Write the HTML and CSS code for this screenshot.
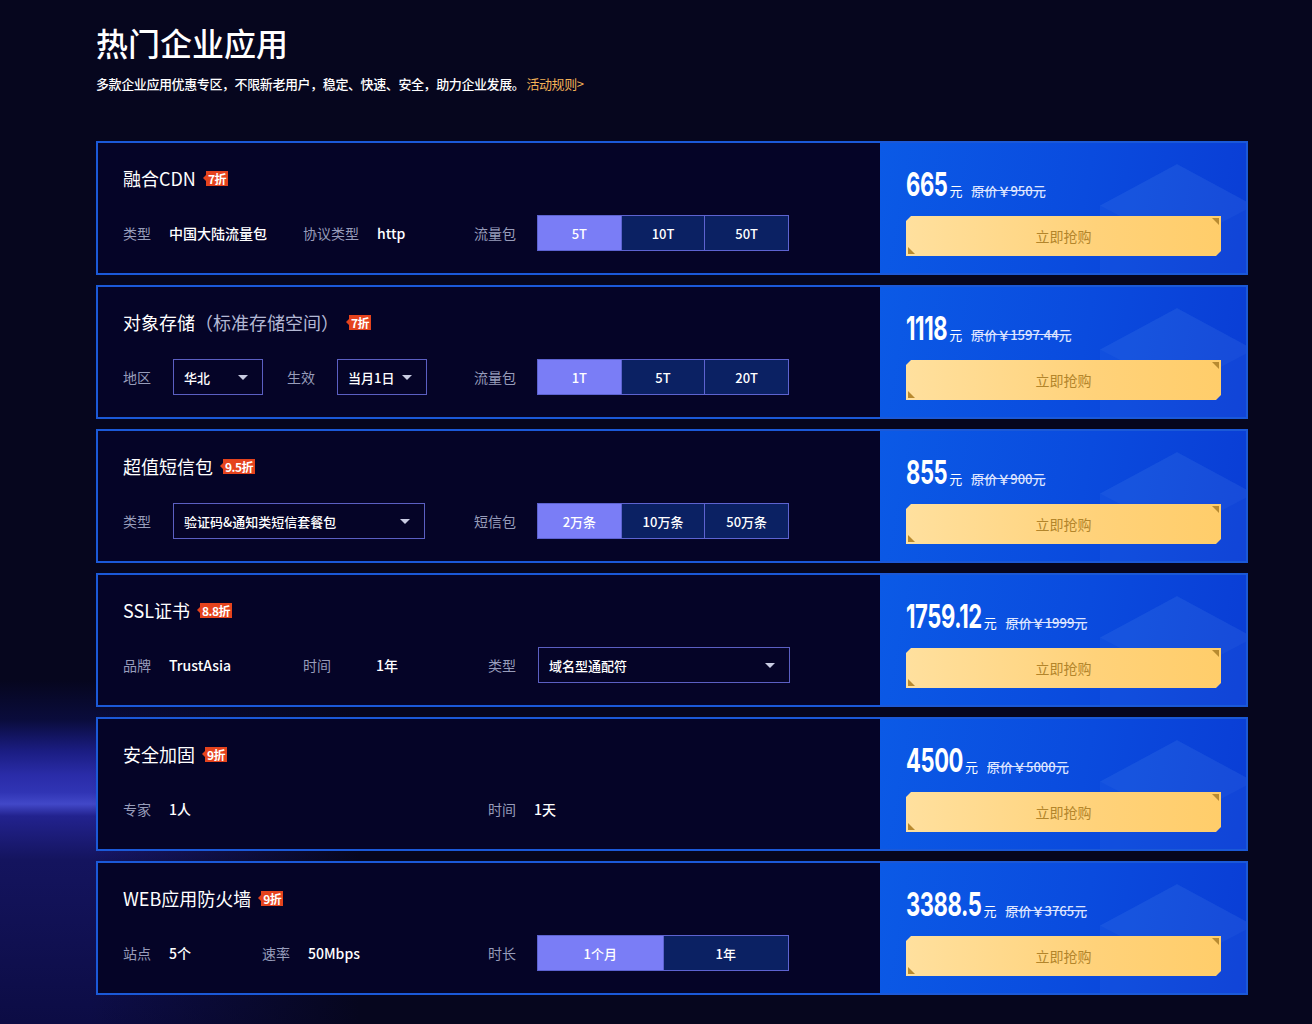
FILE: index.html
```html
<!DOCTYPE html>
<html lang="zh-CN">
<head>
    <meta charset="UTF-8">
    <title>热门企业应用</title>
    <link rel="stylesheet" href="styles.css">
</head>
<body>
    <div class="page">
        <h1 class="title">热门企业应用</h1>
        <p class="desc">多款企业应用优惠专区，不限新老用户，稳定、快速、安全，助力企业发展。<a href="javascript:;">活动规则&gt;</a></p>

        <ul class="product_list">
            <!-- 融合CDN -->
            <li class="product">
                <div class="info">
                    <h3 class="name">融合CDN<em class="tag"><span>7折</span></em></h3>
                    <div class="opts">
                        <div class="col">
                            <div class="field w180"><span class="label">类型</span><span class="val">中国大陆流量包</span></div>
                            <div class="field"><span class="label">协议类型</span><span class="val">http</span></div>
                        </div>
                        <div class="field third"><span class="label">流量包</span>
                            <div class="toggle"><span class="on">5T</span><span>10T</span><span>50T</span></div>
                        </div>
                    </div>
                </div>
                <div class="buy">
                    <div class="price"><strong>665</strong><i>元</i><del>原价￥950元</del></div>
                    <a class="btn" href="javascript:;">立即抢购</a>
                </div>
            </li>
            <!-- 对象存储 -->
            <li class="product">
                <div class="info">
                    <h3 class="name">对象存储<span class="sub">（标准存储空间）</span><em class="tag"><span>7折</span></em></h3>
                    <div class="opts">
                        <div class="col">
                            <div class="field w164"><span class="label">地区</span>
                                <div class="select s90"><span>华北</span><i class="caret"></i></div>
                            </div>
                            <div class="field"><span class="label">生效</span>
                                <div class="select s90"><span>当月1日</span><i class="caret"></i></div>
                            </div>
                        </div>
                        <div class="field third"><span class="label">流量包</span>
                            <div class="toggle"><span class="on">1T</span><span>5T</span><span>20T</span></div>
                        </div>
                    </div>
                </div>
                <div class="buy">
                    <div class="price"><strong>1118</strong><i>元</i><del>原价￥1597.44元</del></div>
                    <a class="btn" href="javascript:;">立即抢购</a>
                </div>
            </li>
            <!-- 短信包 -->
            <li class="product">
                <div class="info">
                    <h3 class="name">超值短信包<em class="tag"><span>9.5折</span></em></h3>
                    <div class="opts">
                        <div class="col">
                            <div class="field"><span class="label">类型</span>
                                <div class="select s252"><span>验证码&amp;通知类短信套餐包</span><i class="caret"></i></div>
                            </div>
                        </div>
                        <div class="field third"><span class="label">短信包</span>
                            <div class="toggle"><span class="on">2万条</span><span>10万条</span><span>50万条</span></div>
                        </div>
                    </div>
                </div>
                <div class="buy">
                    <div class="price"><strong>855</strong><i>元</i><del>原价￥900元</del></div>
                    <a class="btn" href="javascript:;">立即抢购</a>
                </div>
            </li>
            <!-- SSL -->
            <li class="product">
                <div class="info">
                    <h3 class="name">SSL证书<em class="tag"><span>8.8折</span></em></h3>
                    <div class="opts">
                        <div class="col">
                            <div class="field w180"><span class="label">品牌</span><span class="val">TrustAsia</span></div>
                            <div class="field"><span class="label long">时间</span><span class="val">1年</span></div>
                        </div>
                        <div class="field third"><span class="label">类型</span>
                            <div class="select s252"><span>域名型通配符</span><i class="caret"></i></div>
                        </div>
                    </div>
                </div>
                <div class="buy">
                    <div class="price"><strong>1759.12</strong><i>元</i><del>原价￥1999元</del></div>
                    <a class="btn" href="javascript:;">立即抢购</a>
                </div>
            </li>
            <!-- 安全加固 -->
            <li class="product">
                <div class="info">
                    <h3 class="name">安全加固<em class="tag"><span>9折</span></em></h3>
                    <div class="opts">
                        <div class="col">
                            <div class="field"><span class="label">专家</span><span class="val">1人</span></div>
                        </div>
                        <div class="field third"><span class="label">时间</span><span class="val">1天</span></div>
                    </div>
                </div>
                <div class="buy">
                    <div class="price"><strong>4500</strong><i>元</i><del>原价￥5000元</del></div>
                    <a class="btn" href="javascript:;">立即抢购</a>
                </div>
            </li>
            <!-- WAF -->
            <li class="product">
                <div class="info">
                    <h3 class="name">WEB应用防火墙<em class="tag"><span>9折</span></em></h3>
                    <div class="opts">
                        <div class="col">
                            <div class="field w139"><span class="label">站点</span><span class="val">5个</span></div>
                            <div class="field"><span class="label">速率</span><span class="val">50Mbps</span></div>
                        </div>
                        <div class="field third"><span class="label">时长</span>
                            <div class="toggle"><span class="on">1个月</span><span>1年</span></div>
                        </div>
                    </div>
                </div>
                <div class="buy">
                    <div class="price"><strong>3388.5</strong><i>元</i><del>原价￥3765元</del></div>
                    <a class="btn" href="javascript:;">立即抢购</a>
                </div>
            </li>
        </ul>
    </div>
</body>
</html>
```

FILE: styles.css
```css
*{
    margin:0;
    padding:0;
    box-sizing:border-box;
}
ul,li{
    list-style:none;
}
a{
    text-decoration:none;
}
body{
    height:1024px;
    overflow:hidden;
    font-family:"Noto Sans CJK SC","Microsoft YaHei",sans-serif;
    color:#fff;
    background:
        linear-gradient(to right,rgba(6,6,30,0) 0,rgba(6,6,30,0) 90px,#06061e 360px) 0 680px/100% 344px no-repeat,
        linear-gradient(to bottom,#06061e 0,#0a0c3c 40px,#1a1c80 70px,#2a2ca8 95px,#3034b4 112px,#4248c8 124px,#22228e 136px,#14145e 180px,#0c0c44 344px) 0 680px/100% 344px no-repeat,
        #06061e;
}
.page{
    width:1152px;
    margin-left:96px;
    padding-top:20px;
}
.title{
    font-size:32px;
    line-height:44px;
    font-weight:500;
}
.desc{
    margin-top:10px;
    font-size:13px;
    line-height:20px;
    letter-spacing:-0.4px;
    font-weight:500;
}
.desc a{
    margin-left:2px;
    color:#f3b257;
    font-weight:normal;
}
.product_list{
    margin-top:47px;
}
.product{
    display:flex;
    height:134px;
    margin-bottom:10px;
    border:2px solid #1b59d8;
    background:#050427;
}

/* 左侧信息 */
.info{
    flex:1;
    padding:22px 0 0 25px;
}
.name{
    display:flex;
    align-items:center;
    height:26px;
    font-size:18px;
    font-weight:normal;
}
.name .sub{
    color:#b3b8d4;
}
.tag{
    display:flex;
    align-items:center;
    margin-left:7px;
    font-style:normal;
}
.tag:before{
    content:"";
    border-right:3px solid #e5431d;
    border-top:3px solid transparent;
    border-bottom:3px solid transparent;
}
.tag span{
    display:block;
    height:15px;
    padding:0 2px;
    line-height:15px;
    font-size:12px;
    font-weight:bold;
    letter-spacing:-0.5px;
    background:#e5431d;
}
.opts{
    display:grid;
    grid-template-columns:351px auto;
    align-items:center;
    height:36px;
    margin-top:24px;
}
.col{
    display:flex;
    align-items:center;
}
.field{
    display:flex;
    align-items:center;
    gap:18px;
    font-size:14px;
}
.w180{width:180px;}
.w164{width:164px;}
.w139{width:139px;}
.label{
    color:#979cba;
}
.label.long{
    min-width:55px;
}
.third .label{
    min-width:42px;
    text-align:right;
}
.val{
    font-weight:500;
}
.select{
    display:flex;
    align-items:center;
    justify-content:space-between;
    height:36px;
    margin-left:4px;
    padding:0 14px 0 10px;
    border:1px solid #5b5fc2;
    font-size:13px;
    font-weight:500;
}
.s90{width:90px;}
.s252{width:252px;}
.caret{
    border-top:5px solid #c9cce2;
    border-left:5px solid transparent;
    border-right:5px solid transparent;
}
.toggle{
    display:flex;
    width:252px;
    height:36px;
    margin-left:3px;
    border:1px solid #5d63d0;
}
.toggle span{
    flex:1;
    display:flex;
    align-items:center;
    justify-content:center;
    font-size:13px;
    font-weight:500;
    background:#0b2163;
}
.toggle span+span{
    border-left:1px solid #5d63d0;
}
.toggle .on{
    background:#7a7df6;
}

/* 右侧价格 */
.buy{
    position:relative;
    overflow:hidden;
    width:366px;
    padding:22px 25px 0 26px;
    background:linear-gradient(100deg,#0b5ae6 0,#0a4bde 55%,#0a3dd5 100%);
}
.buy:before,.buy:after{
    content:"";
    position:absolute;
    left:220px;
    top:21px;
    width:154px;
    height:130px;
}
.buy:before{
    background:rgba(110,170,255,0.07);
    clip-path:polygon(50% 0,100% 32%,100% 100%,0 100%,0 32%);
}
.buy:after{
    background:rgba(140,190,255,0.05);
    clip-path:polygon(50% 0,100% 32%,50% 63%,0 32%);
}
.price{
    position:relative;
    z-index:1;
    display:flex;
    align-items:baseline;
    height:38px;
    padding-top:12px;
}
/* 数字用拉高的方式模拟窄体 */
.price strong{
    display:inline-block;
    font-family:Inter,"Open Sans",sans-serif;
    font-size:22px;
    line-height:23px;
    letter-spacing:-0.4px;
    transform:scaleY(1.5);
    transform-origin:0 20px;
}
.price i{
    margin-left:2px;
    font-style:normal;
    font-size:13px;
}
.price del{
    margin-left:9px;
    font-size:13px;
    font-weight:500;
    color:#dde4ff;
}
.btn{
    position:relative;
    z-index:1;
    display:flex;
    align-items:center;
    justify-content:center;
    height:40px;
    margin-top:13px;
    font-size:14px;
    color:#b3852b;
    background:linear-gradient(to right,#ffe09e,#ffd27a 60%,#ffcd6a);
    clip-path:polygon(5px 0,100% 0,100% calc(100% - 5px),calc(100% - 5px) 100%,0 100%,0 5px);
}
.btn:before,.btn:after{
    content:"";
    position:absolute;
    width:0;
    height:0;
}
.btn:before{
    top:2px;
    right:2px;
    border-top:7px solid #b88a30;
    border-left:7px solid transparent;
}
.btn:after{
    bottom:2px;
    left:2px;
    border-bottom:7px solid #b88a30;
    border-right:7px solid transparent;
}
```
